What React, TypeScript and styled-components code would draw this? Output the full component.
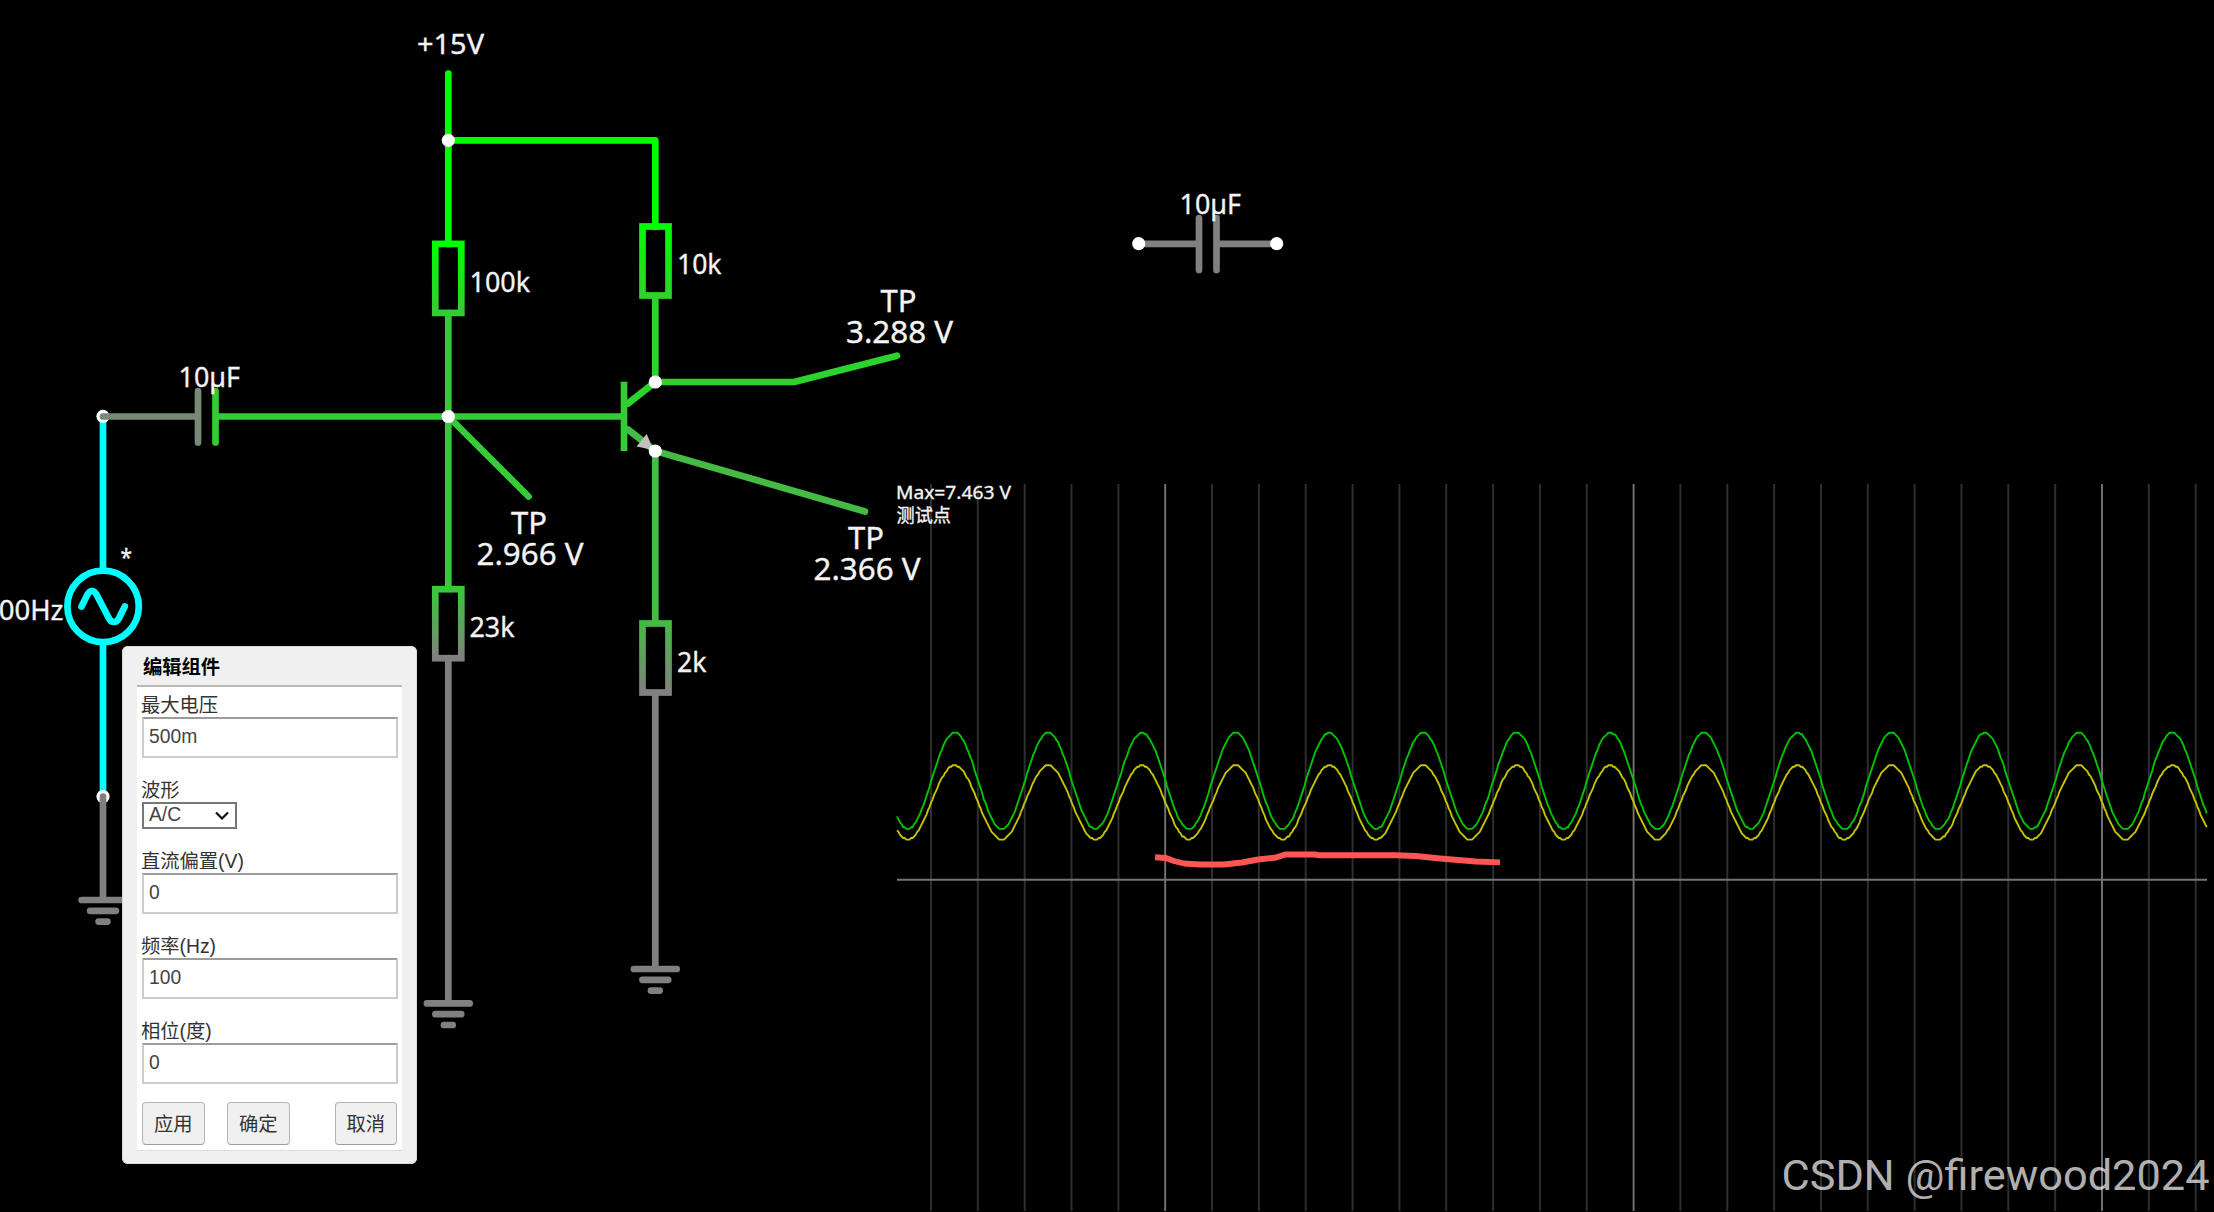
import styled, { createGlobalStyle } from "styled-components";
import { useState } from "react";

const GlobalStyle = createGlobalStyle`
  html, body{
    margin: 0;
    background: #000000;
  }
`;

const Stage = styled.main`
  position: relative;
  width: 2214px;
  height: 1212px;
  overflow: hidden;
  background: #000000;
`;
const Canvas = styled.svg`
  display: block;
  width: 2214px;
  height: 1212px;
`;
const Wire = styled.path<{ tone: string }>`
  fill: none;
  stroke: ${({ tone }) => tone};
  stroke-width: 6.7px;
  stroke-linecap: round;
  stroke-linejoin: round;
`;
const Bar = styled(Wire)`
  stroke-linecap: butt;
`;
const Body = styled.rect`
  fill: none;
  stroke-width: 6.7px;
`;
const Dot = styled.circle`
  fill: #ffffff;
`;
const CanvasText = styled.text<{ size: number }>`
  font-family: "Noto Sans", "Noto Sans CJK SC", sans-serif;
  font-size: ${({ size }) => size}px;
  fill: #f4f4f4;
  stroke: #f4f4f4;
  stroke-width: 0.35px;
  white-space: pre;
`;
const GridLine = styled.path<{ major?: boolean }>`
  fill: none;
  stroke: ${({ major }) => major ? "#747474" : "#2e2e2e"};
  stroke-width: ${({ major }) => major ? 1.9 : 2}px;
`;
const Trace = styled.path<{ tone: string }>`
  fill: none;
  stroke: ${({ tone }) => tone};
  stroke-width: 1.9px;
  stroke-linejoin: round;
`;
const Marker = styled.path`
  fill: none;
  stroke: #ff5555;
  stroke-width: 5.9px;
  stroke-linejoin: round;
  stroke-linecap: square;
`;
const Watermark = styled.text`
  font-family: Roboto, "Liberation Sans", sans-serif;
  font-size: 42px;
  fill: rgba(255, 255, 255, 0.7);
`;

const Dialog = styled.form`
  position: absolute;
  left: 122px;
  top: 646px;
  display: flex;
  flex-direction: column;
  width: 295px;
  height: 518px;
  padding: 0 15px 14px;
  box-sizing: border-box;
  border-radius: 6px;
  background: #f0f0f0;
  box-shadow: inset 0 0 0 1px #d9d9d9;
  color: #333333;
  font-family: "Liberation Sans", "Noto Sans CJK SC", sans-serif;
  font-size: 19.3px;
`;
const Title = styled.h1`
  height: 39px;
  margin: 0;
  padding-left: 6px;
  color: #000000;
  font-size: 19.3px;
  font-weight: 700;
  line-height: 43px;
`;
const Content = styled.div`
  display: flex;
  flex: 1;
  flex-direction: column;
  padding: 8px 5px 5px;
  border-top: 2px solid #b8b8b8;
  border-bottom: 1px solid #dddddd;
  background: #ffffff;
`;
const Field = styled.label<{ space: number }>`
  display: flex;
  flex-direction: column;
  align-items: flex-start;
  margin-bottom: ${({ space }) => space}px;
  span{
    height: 22px;
    margin-left: -1px;
    line-height: 21px;
    white-space: nowrap;
  }
`;
const Input = styled.input`
  width: 256px;
  height: 41px;
  padding: 0 5px 1px;
  box-sizing: border-box;
  border: 2px solid #cccccc;
  border-top-color: #9b9b9b;
  outline: none;
  color: #444444;
  background: #ffffff;
  font: inherit;
`;
const SelectBox = styled.div`
  display: flex;
  align-items: center;
  justify-content: space-between;
  width: 95px;
  height: 27px;
  padding: 0 6px 1px 5px;
  box-sizing: border-box;
  border: 2px solid #767676;
  color: #444444;
  background: #ffffff;
  svg{
    width: 14px;
    height: 9px;
    fill: none;
    stroke: #111111;
    stroke-width: 2.2px;
  }
`;
const Actions = styled.div`
  display: flex;
  gap: 22.5px;
`;
const Button = styled.button<{ last?: boolean }>`
  width: 62.5px;
  height: 43px;
  margin-left: ${({ last }) => last ? "auto" : "0"};
  padding: 0 0 1px;
  border: 1.5px solid #b5b5b5;
  border-bottom-color: #9c9c9c;
  border-radius: 4px;
  color: #333333;
  background: #f0f0f0;
  font: inherit;
`;

const GREY = "#808080";
const SUPPLY = "#00ff00";
const BASE = "#36ca36";
const COLLECTOR = "#2dd32d";
const EMITTER = "#45ba45";
const SELECTED = "#00ffff";

interface LabelProps {
  x: number
  y: number
  width: number
  size?: number
  children: string
}

const Label = ({ x, y, width, size = 28, children }: LabelProps) => (
  <CanvasText x={x} y={y} size={size} textLength={width} lengthAdjust="spacingAndGlyphs">
    {children}
  </CanvasText>
);

interface ResistorProps {
  id: string
  x: number
  y: number
  from: string
  to: string
}

const Resistor = ({ id, x, y, from, to }: ResistorProps) => (
  <>
    <linearGradient id={id} gradientUnits="userSpaceOnUse" x1={x} x2={x} y1={y} y2={y + 69}>
      <stop offset="0" stopColor={from} />
      <stop offset="1" stopColor={to} />
    </linearGradient>
    <Body x={x - 13} y={y} width={26} height={69} stroke={`url(#${id})`} />
  </>
);

const Ground = ({ x, y }: { x: number, y: number }) => (
  <Wire
    tone={GREY}
    d={`M${x - 21.4} ${y}h42.8M${x - 12.9} ${y + 10.8}h25.8M${x - 4.4} ${y + 21.6}h8.8`}
  />
);

const TestPoint = ({ x, y, value }: { x: number, y: number, value: string }) => (
  <>
    <Label x={x - 17.5} y={y} width={36} size={31}>TP</Label>
    <Label x={x - 52} y={y + 30.3} width={107} size={31}>{value}</Label>
  </>
);

const Circuit = () => (
  <g>
    <Wire tone={SUPPLY} d="M448.3 73.5V244M448.3 140.3H655.3V227" />
    <Wire tone={BASE} d="M448.3 313V589M215.5 416.5H622M448.3 416.5L528.5 496.5M215.5 391V442.5" />
    <Wire tone={COLLECTOR} d="M655.3 296V382H794L897 355.7M628 403.5L655.3 382" />
    <Wire tone={EMITTER} d="M628 429.5L655.3 451V623M655.3 451L865 511.5" />
    <Bar tone={BASE} d="M624 381.7V451" />
    <path d="M653.5 450L646.7 434L636.5 446.5Z" fill="#c0c0c0" />
    <Wire tone={GREY} d="M448.3 658V1003M655.3 693V968" />
    <Resistor id="r100k" x={448.3} y={243.9} from={SUPPLY} to={BASE} />
    <Resistor id="r10k" x={655.5} y={226.5} from={SUPPLY} to={COLLECTOR} />
    <Resistor id="r23k" x={448.3} y={589.2} from={BASE} to={GREY} />
    <Resistor id="r2k" x={655.5} y={623.5} from={EMITTER} to={GREY} />

    <Wire tone={SELECTED} d="M103 417V568M103 645V796" />
    <circle cx={103.1} cy={606.4} r={35.7} fill="none" stroke={SELECTED} strokeWidth={6.7} />
    <Wire tone={SELECTED} d="M81.5 606.5L87.5 594.5Q89.5 591 92 591Q94.5 591 96.5 594.5L109 618.5Q111 622 114 622Q117 622 118.8 618.5L124.8 606.5" />
    <Dot cx={103} cy={416.3} r={6.6} />
    <Wire tone="#768a76" d="M103 416.5H198M198 391V442.5" />
    <Dot cx={103} cy={796.5} r={6.6} />
    <Wire tone={GREY} d="M103 796.5V899" />
    <Ground x={103} y={900} />
    <Ground x={448.3} y={1003.4} />
    <Ground x={655.3} y={969} />

    <Wire tone={GREY} d="M1138.7 243.8H1199M1199 218V270M1216.5 218V270M1216.5 243.8H1276.7" />
    <Dot cx={1138.7} cy={243.7} r={6.6} />
    <Dot cx={1276.7} cy={243.7} r={6.6} />
    <Dot cx={448.3} cy={140.3} r={6.6} />
    <Dot cx={448.3} cy={416.5} r={6.6} />
    <Dot cx={655.3} cy={382} r={6.6} />
    <Dot cx={655.3} cy={451} r={6.6} />

    <Label x={417} y={54} width={67}>+15V</Label>
    <Label x={469.5} y={292} width={60.5}>100k</Label>
    <Label x={677} y={274} width={44.5}>10k</Label>
    <Label x={469.5} y={636.7} width={45}>23k</Label>
    <Label x={677} y={671.5} width={29.5}>2k</Label>
    <Label x={178.5} y={386.5} width={61.5}>10µF</Label>
    <Label x={1179.5} y={213.9} width={61.5}>10µF</Label>
    <Label x={-17} y={619.5} width={80.5}>100Hz</Label>
    <Label x={120.5} y={566} width={11.5} size={24}>*</Label>
    <TestPoint x={898} y={312.4} value="3.288 V" />
    <TestPoint x={528.5} y={534.3} value="2.966 V" />
    <TestPoint x={865.5} y={549.4} value="2.366 V" />
  </g>
);

const SCOPE = { left: 897, right: 2207, top: 484, bottom: 1211 };
const PIXEL = 1.55;

// The simulator plots in whole logical pixels, so the crests come out flat
const sine = (middle: number, amplitude: number) => {
  const points: string[] = [];
  for (let x = SCOPE.left; x <= SCOPE.right; x += PIXEL) {
    const offset = amplitude * Math.cos(((x - 954.7) / 93.66) * 2 * Math.PI);
    const y = middle - Math.round(offset / PIXEL) * PIXEL;
    points.push(`${x.toFixed(2)} ${y.toFixed(2)}`);
  }
  return `M${points.join("L")}`;
};

const Scope = () => {
  const lines = Array.from({ length: 28 }, (_, i) => ({
    x: 931 + i * 46.84,
    major: i % 10 === 5,
  }));

  return (
    <g>
      {lines.map(({ x, major }) => (
        <GridLine key={x} major={major} d={`M${x.toFixed(1)} ${SCOPE.top}V${SCOPE.bottom}`} />
      ))}
      <GridLine major d={`M${SCOPE.left} 879.7H${SCOPE.right}`} />
      <Trace tone="#c4c400" d={sine(802.4, 37)} />
      <Trace tone="#00c400" d={sine(780.8, 48.1)} />
      <Marker d="M1158 857.5L1166 858L1174 861L1184 863.5L1200 864.5H1224L1242 862.5L1258 859.5L1276 857.5L1285 854.5H1315L1320 855.3H1395L1416 856L1440 858.5L1458 860L1476 861.5L1497 862.3" />
      <Label x={896} y={499.3} width={115} size={18.5}>Max=7.463 V</Label>
      <Label x={896.5} y={521.5} width={54.5} size={18}>测试点</Label>
    </g>
  );
};

interface TextFieldProps {
  label: string
  initial: string
  space?: number
}

const TextField = ({ label, initial, space = 22 }: TextFieldProps) => {
  const [value, setValue] = useState(initial);

  return (
    <Field space={space}>
      <span>{label}</span>
      <Input value={value} onChange={(e) => setValue(e.target.value)} />
    </Field>
  );
};

const EditDialog = () => (
  <Dialog onSubmit={(e) => e.preventDefault()}>
    <Title>编辑组件</Title>
    <Content>
      <TextField label="最大电压" initial="500m" />
      <Field space={22}>
        <span>波形</span>
        <SelectBox>
          A/C
          <svg viewBox="0 0 14 9"><path d="M1 1.5L7 7.5L13 1.5" /></svg>
        </SelectBox>
      </Field>
      <TextField label="直流偏置(V)" initial="0" />
      <TextField label="频率(Hz)" initial="100" />
      <TextField label="相位(度)" initial="0" space={18} />
      <Actions>
        <Button type="button">应用</Button>
        <Button type="submit">确定</Button>
        <Button type="button" last>取消</Button>
      </Actions>
    </Content>
  </Dialog>
);

const App = () => (
  <>
    <GlobalStyle />
    <Stage>
      <Canvas viewBox="0 0 2214 1212">
        <Circuit />
        <Scope />
        <Watermark x={1781.5} y={1190} textLength={428} lengthAdjust="spacingAndGlyphs">
          CSDN @firewood2024
        </Watermark>
      </Canvas>
      <EditDialog />
    </Stage>
  </>
);

export default App;
